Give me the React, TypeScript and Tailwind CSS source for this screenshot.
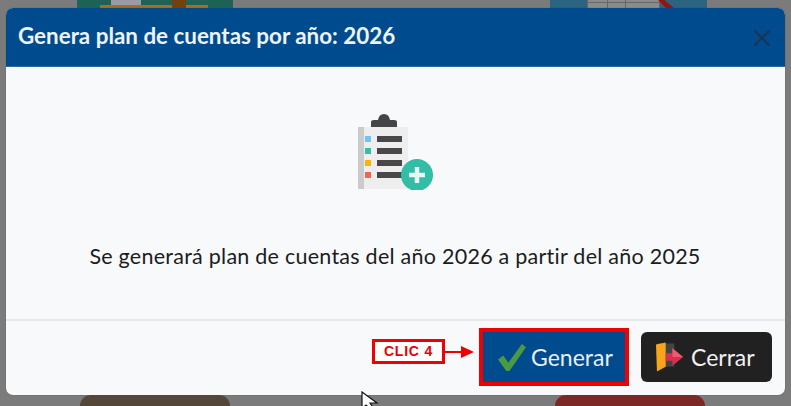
export default function App() {
  return (
    <div className="relative w-[791px] h-[406px] overflow-hidden bg-[#7b7b7b] pt-2 pl-[6px]" style={{ fontFamily: "Lato, 'Open Sans', sans-serif" }}>
      {/* dimmed page behind the dialog */}
      <div className="absolute inset-0 flex flex-col justify-between">
        <div className="h-2 flex pl-[77px] gap-[317px]">
          <div className="w-[156px] h-2 bg-[#1f6357] flex flex-col">
            <div className="h-[5px] flex">
              <div className="ml-[34px] w-[30px] bg-[#9a9aa8]" />
              <div className="ml-[31px] w-[14px] bg-[#74400f]" />
            </div>
            <div className="h-[3px] ml-[23px] w-[108px] bg-[#a8701c] flex">
              <div className="ml-[72px] w-[14px] bg-[#74400f]" />
            </div>
          </div>
          <div className="w-[157px] h-2 bg-[#2b6480] flex">
            <div className="ml-[37px] w-[73px] grid grid-cols-[20px_18px_1fr] grid-rows-[3px_5px] bg-[#8b8b8b] border-l border-[#666]">
              <div className="border-r border-b border-[#666]" />
              <div className="border-r border-b border-[#666]" />
              <div className="border-r border-b border-[#666]" />
              <div className="border-r border-[#666]" />
              <div className="border-r border-[#666]" />
              <div className="border-r border-[#666]" />
            </div>
            <div className="-ml-[2px] w-[16px] bg-[#961414] [clip-path:polygon(0_0,40%_0,100%_100%,50%_100%)]" />
          </div>
        </div>
        <div className="h-[11px] flex pl-[80px] gap-[325px]">
          <div className="w-[150px] rounded-t-[50px] bg-[#54473a]" />
          <div className="w-[150px] rounded-t-[50px] bg-[#7c2827]" />
        </div>
      </div>

      <div className="relative w-[779px] h-[387px] rounded-[7px] overflow-hidden bg-[#f8f9fb] flex flex-col shadow-[0_0_1px_#444]">
        <header className="h-[59px] bg-[#004b8d] flex items-center justify-between pl-[12px] pr-[14px] border-b border-[#2a6cab]">
          <h1 className="text-[22.4px] font-bold text-[#eef3f8] leading-none -mt-[1px]">Genera plan de cuentas por año: 2026</h1>
          <svg width="18" height="18" viewBox="0 0 18 18" className="text-[#1a3554] mt-[1px]">
            <path d="M1.5 1.5 L16.5 16.5 M16.5 1.5 L1.5 16.5" stroke="currentColor" strokeWidth="2.2" />
          </svg>
        </header>

        <main className="flex-1 flex flex-col items-center">
          <svg width="76" height="76" viewBox="0 0 76 76" className="mt-[47px] -ml-[2px]" style={{ filter: "blur(0.4px)" }}>
            <rect x="1" y="13" width="50" height="62" fill="#eeeeee" />
            <rect x="1" y="13" width="6" height="62" fill="#cbcbcb" />
            <path d="M14 13 V8 Q14 6 17 6 H21 Q22 0 27 0 Q32 0 33 6 H37 Q40 6 40 8 V13 Z" fill="#454545" />
            <rect x="8" y="22" width="6" height="6" fill="#6ec4f4" />
            <rect x="8" y="34" width="6" height="6" fill="#2fc1a6" />
            <rect x="8" y="46" width="6" height="6" fill="#fbb40a" />
            <rect x="8" y="58" width="6" height="6" fill="#f4644f" />
            <rect x="20" y="22" width="25" height="6" fill="#484848" />
            <rect x="20" y="34" width="25" height="6" fill="#484848" />
            <rect x="20" y="46" width="25" height="6" fill="#484848" />
            <rect x="20" y="58" width="25" height="6" fill="#484848" />
            <circle cx="60" cy="61" r="16" fill="#33bda6" />
            <path d="M52 61 H68 M60 53 V69" stroke="#e9f7f4" strokeWidth="4.5" />
          </svg>
          <p className="mt-[54px] -ml-[1px] text-[21.5px] leading-6 text-[#1c1c1c] tracking-[0.25px] whitespace-nowrap">Se generará plan de cuentas del año 2026 a partir del año 2025</p>
        </main>

        <footer className="h-[76px] border-t-2 border-[#e6e8ec] flex items-start justify-end pt-[7px] pr-[13px]">
          <div className="flex items-center mt-[11px] mr-[5px]">
            <span className="w-[73px] h-[25px] border-[3px] border-[#f00000] bg-white text-[#ee0000] text-[14px] font-bold flex items-center justify-center tracking-[0.8px]" style={{ fontFamily: "'Liberation Sans', sans-serif" }}>CLIC 4</span>
            <svg width="29" height="12" viewBox="0 0 29 12"><path d="M0 5 H16 V0 L29 6 L16 12 V7 H0 Z" fill="#ee0000" /></svg>
          </div>
          <div className="flex items-center gap-[13px]">
            <div className="border-[4px] border-[#f00000] w-[150px] h-[58px] -mr-px">
              <button className="w-full h-full bg-[#004b8d] flex items-center pl-[14px] gap-[5px] text-[#e8eef5] text-[23px]">
                <svg width="29" height="29" viewBox="0 0 28 28"><path d="M1 16 L6 12 L11 19 L24 1 L28 4 L12 27 H9 Z" fill="#4a9a43" /></svg>
                <span>Generar</span>
              </button>
            </div>
            <button className="w-[131px] h-[50px] rounded-[6px] bg-[#212121] flex items-center pl-[15px] gap-[6px] text-[#f0f0f0] text-[23px]">
              <svg width="29" height="30" viewBox="0 0 30 30">
                <rect x="2" y="1" width="17" height="24" fill="#444" />
                <path d="M0 2 L10 0 V25 L1 30 Z" fill="#f9a51c" />
                <path d="M10 11 H17 V6 L28 15 L17 24 V19 H10 Z" fill="#d9304f" />
                <path d="M17 6 L28 15 H17 Z" fill="#ee5a70" />
              </svg>
              <span>Cerrar</span>
            </button>
          </div>
        </footer>
      </div>

      {/* mouse pointer */}
      <svg width="18" height="18" viewBox="0 0 18 18" className="absolute left-[361px] top-[391px]">
        <path d="M1 1 V18 L5 14 L9 18 H13 L9 12 H16 Z" fill="#fff" stroke="#111" strokeWidth="1.2" />
      </svg>
    </div>
  );
}
